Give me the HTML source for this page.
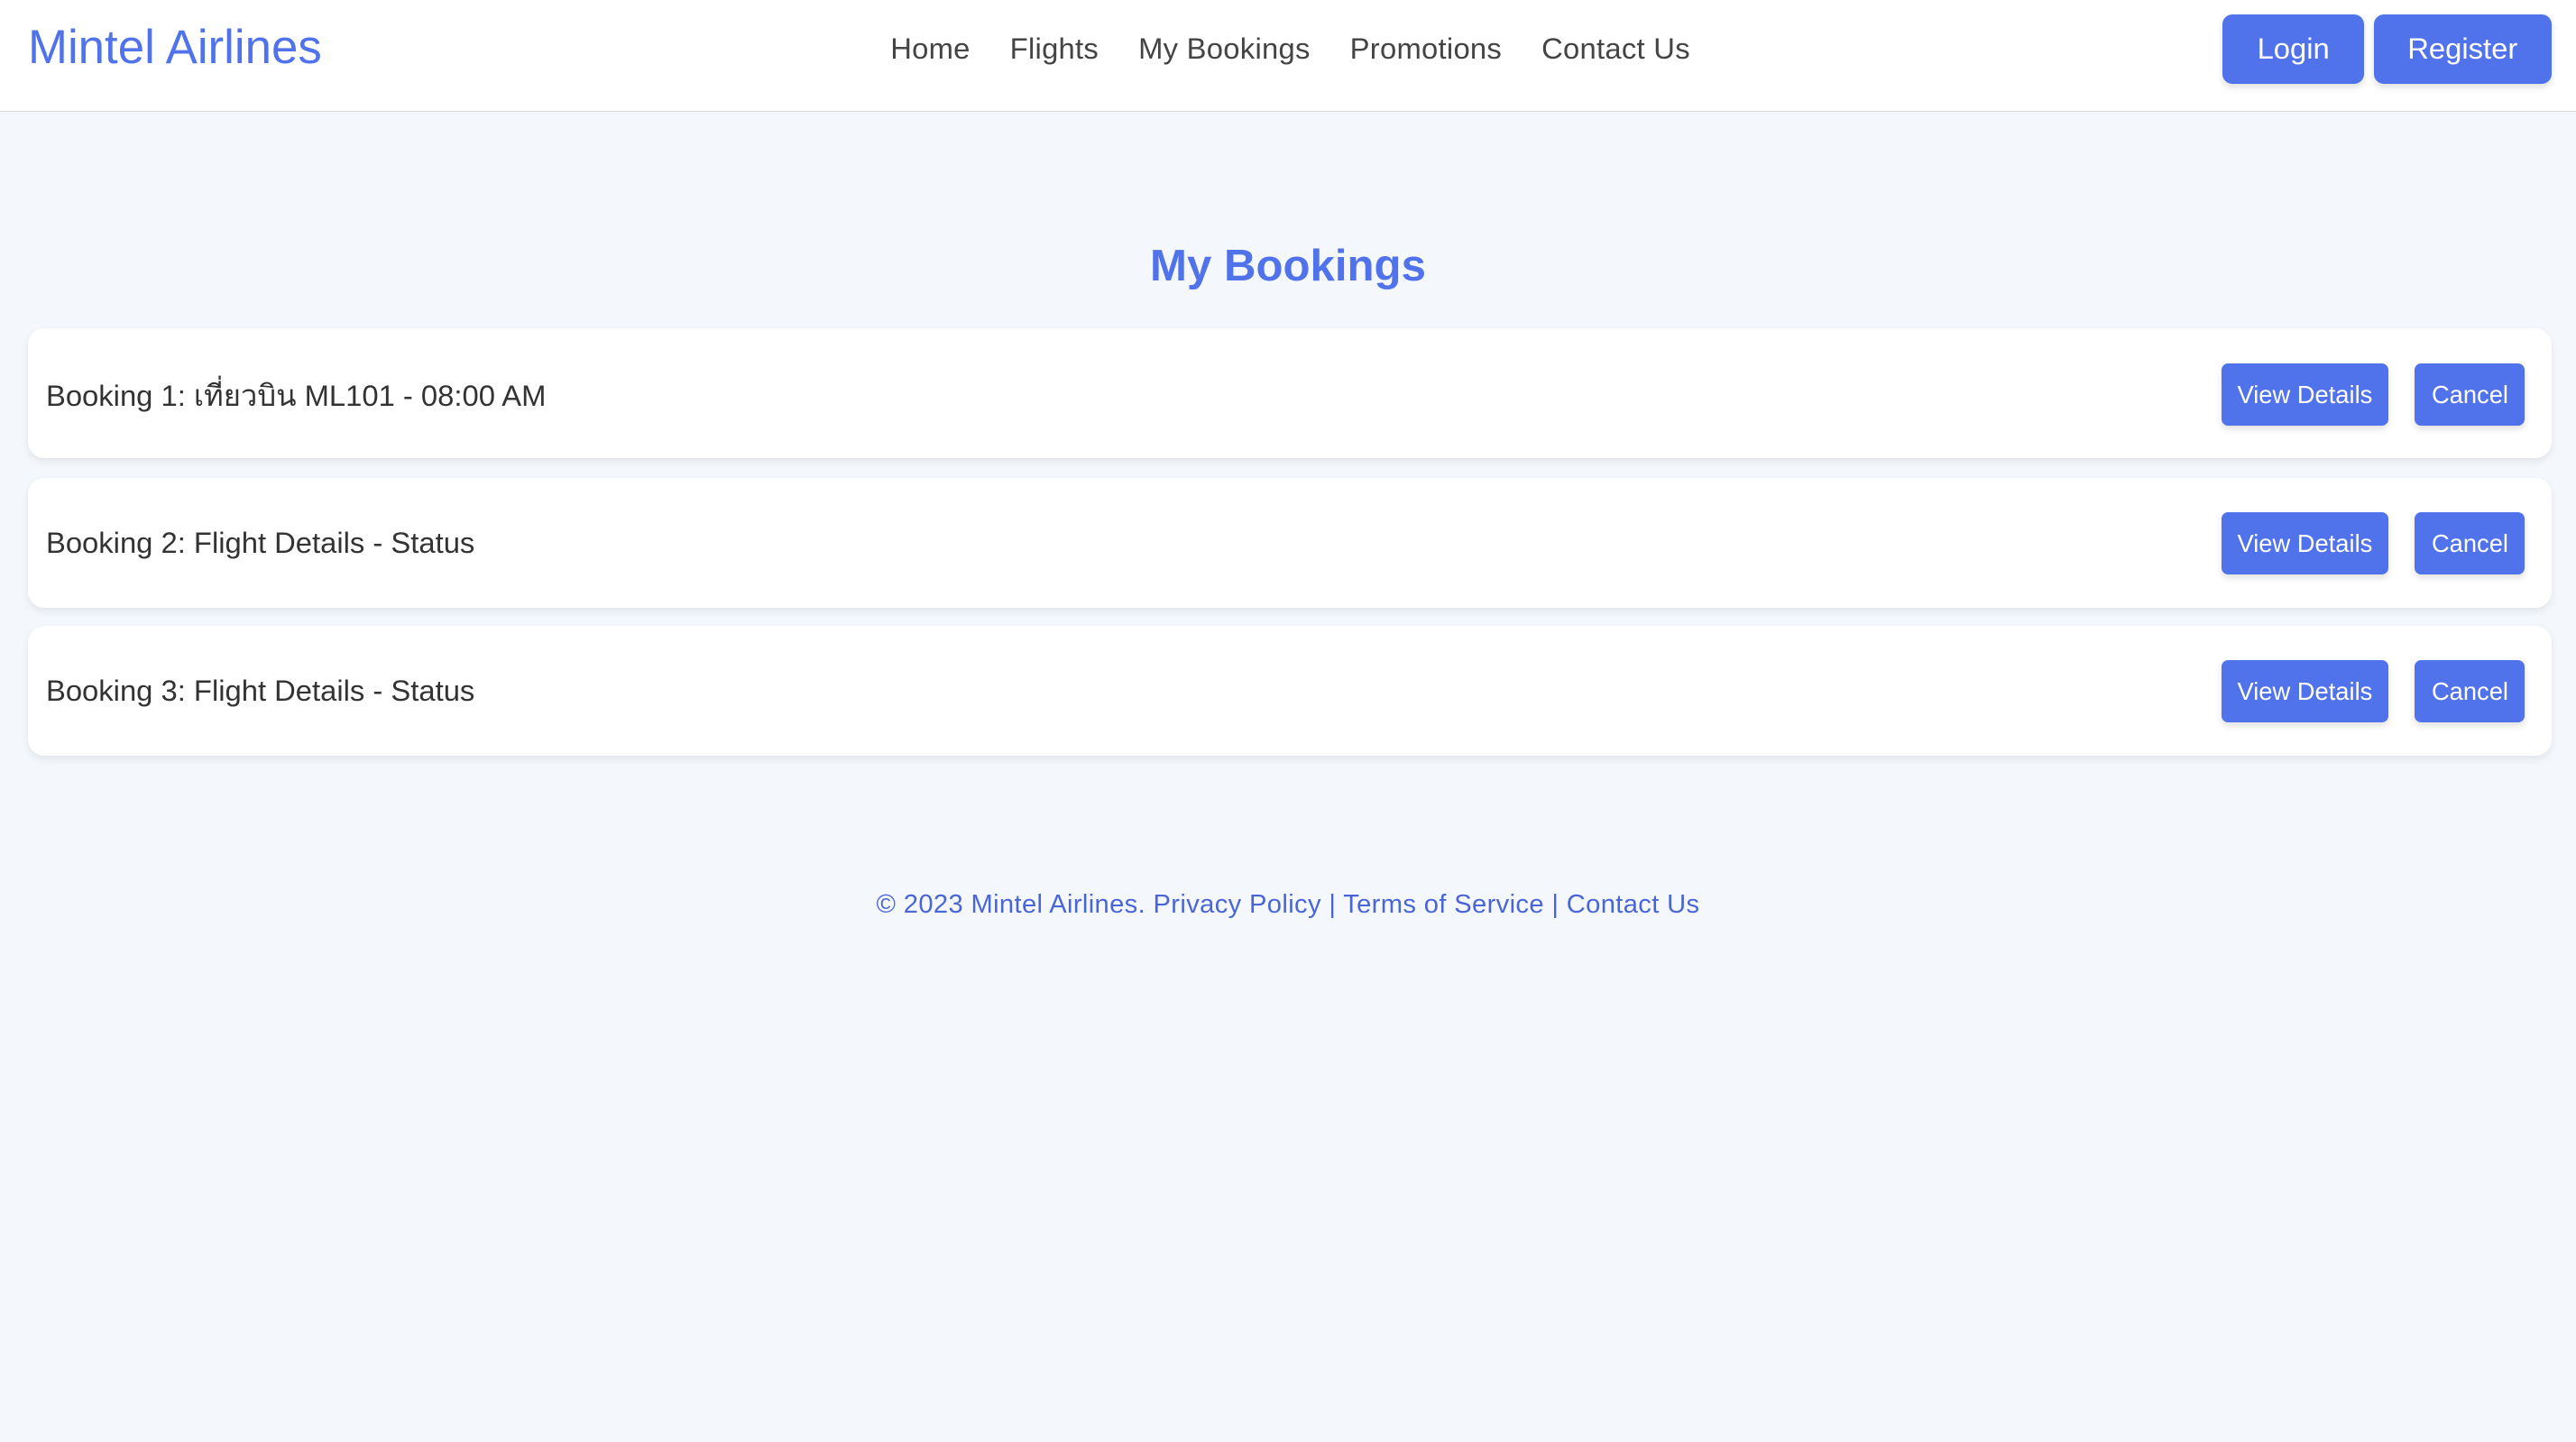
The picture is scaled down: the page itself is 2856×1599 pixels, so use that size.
<!DOCTYPE html>
<html><head><meta charset="utf-8"><style>
html{zoom:1.8214}
*{box-sizing:border-box;margin:0;padding:0}
body{width:1568px;height:878px;background:#f4f8fc;font-family:"Liberation Sans","Noto Sans CJK SC",sans-serif;overflow:hidden}
header{height:68px;background:#fff;border-bottom:1px solid #ddd;position:relative}
.logo{position:absolute;left:17px;top:12px;font-size:29px;color:#5072ea;letter-spacing:0}
nav{position:absolute;left:542px;top:19px;font-size:18px;color:#444;letter-spacing:0.15px}
nav span{margin-right:19px}
.hb{position:absolute;top:9px;height:42px;background:#5072ea;color:#fff;border-radius:6px;font-size:18px;line-height:42px;text-align:center;box-shadow:0 2px 4px rgba(0,0,0,.12)}
h1{position:absolute;top:146px;width:1568px;text-align:center;font-size:27px;color:#5072ea;font-weight:bold}
.card{position:absolute;left:17px;width:1536px;height:79px;background:#fff;border-radius:10px;box-shadow:0 2px 5px rgba(0,0,0,.08)}
.card .t{position:absolute;left:11px;top:29px;font-size:18px;color:#333}
.b{position:absolute;top:21px;height:38px;background:#5072ea;color:#fff;border-radius:4px;font-size:15px;line-height:38px;text-align:center;box-shadow:0 2px 4px rgba(0,0,0,.12)}
footer{position:absolute;top:542px;width:1568px;text-align:center;font-size:16px;color:#4a66d6;letter-spacing:0.2px}
</style></head><body>
<header>
<div class="logo">Mintel Airlines</div>
<nav><span>Home</span> <span>Flights</span> <span>My Bookings</span> <span>Promotions</span> <span>Contact Us</span></nav>
<div class="hb" style="left:1353px;width:86px">Login</div>
<div class="hb" style="left:1445px;width:108px">Register</div>
</header>
<h1>My Bookings</h1>
<div class="card" style="top:200px"><div class="t" style="top:27px">Booking 1: เที่ยวบิน ML101 - 08:00 AM</div><div class="b" style="left:1335px;width:102px">View Details</div><div class="b" style="left:1453px;width:67px">Cancel</div></div>
<div class="card" style="top:291px"><div class="t">Booking 2: Flight Details - Status</div><div class="b" style="left:1335px;width:102px">View Details</div><div class="b" style="left:1453px;width:67px">Cancel</div></div>
<div class="card" style="top:381px"><div class="t">Booking 3: Flight Details - Status</div><div class="b" style="left:1335px;width:102px">View Details</div><div class="b" style="left:1453px;width:67px">Cancel</div></div>
<footer>© 2023 Mintel Airlines. Privacy Policy | Terms of Service | Contact Us</footer>
</body></html>
